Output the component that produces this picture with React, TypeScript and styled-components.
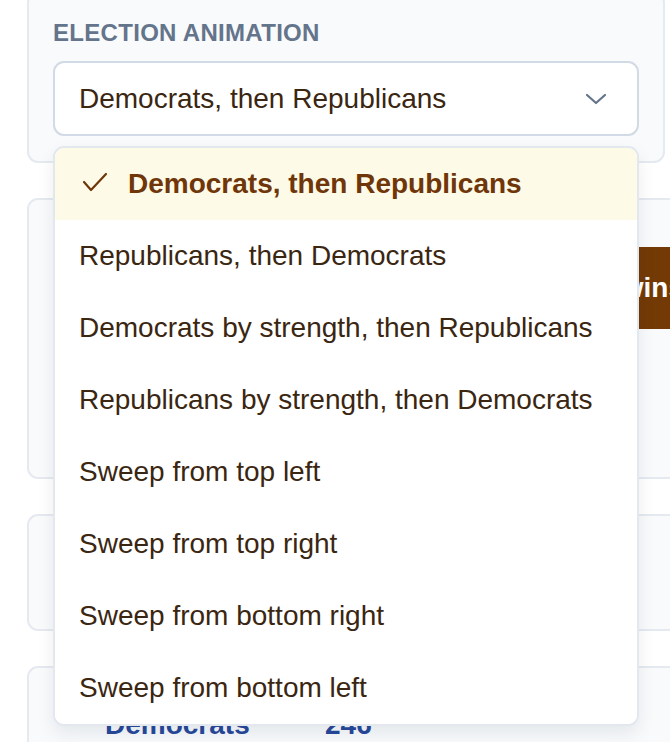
import React, { useState } from "react";
import styled, { createGlobalStyle } from "styled-components";

const GlobalStyle = createGlobalStyle`
    html, body {
        margin: 0;
        padding: 0;
        background: #ffffff;
        overflow: hidden;
    }
    body {
        font-family: "Liberation Sans", Arial, Helvetica, sans-serif;
    }
`;

const ORDERS = [
    "Democrats, then Republicans",
    "Republicans, then Democrats",
    "Democrats by strength, then Republicans",
    "Republicans by strength, then Democrats",
    "Sweep from top left",
    "Sweep from top right",
    "Sweep from bottom right",
    "Sweep from bottom left",
];

const Page = styled.main`
    display: flex;
    flex-direction: column;
    gap: 35px;
    padding-left: 27px;
    margin-top: -8px;
`;

const Card = styled.section<{ $width: number; $height?: number }>`
    box-sizing: border-box;
    width: ${(p) => p.$width}px;
    height: ${(p) => (p.$height ? `${p.$height}px` : "auto")};
    flex-shrink: 0;
    background: #f8fafc;
    border: 2px solid #e5e9f0;
    border-radius: 11px;
    padding: 24px;
`;

const SettingsCard = styled(Card)`
    position: relative;
    z-index: 2;
    padding: 26px 24px 25px;
`;

const Label = styled.div`
    font-size: 24px;
    line-height: 26px;
    font-weight: 700;
    letter-spacing: 0.3px;
    color: #64748b;
    text-transform: uppercase;
    margin-bottom: 15px;
`;

const SelectWrap = styled.div`
    position: relative;
`;

const Trigger = styled.button`
    box-sizing: border-box;
    width: 100%;
    height: 75px;
    display: flex;
    align-items: center;
    justify-content: space-between;
    padding: 0 30px 0 24px;
    background: #ffffff;
    border: 2px solid #d2dae5;
    border-radius: 11px;
    font-family: inherit;
    font-size: 28px;
    color: #3a2611;
    cursor: pointer;
`;

const Menu = styled.ul`
    position: absolute;
    top: calc(100% + 10px);
    left: 0;
    right: 0;
    margin: 0;
    padding: 0;
    list-style: none;
    background: #ffffff;
    border: 2px solid #e3e8ef;
    border-radius: 11px;
    overflow: hidden;
    box-shadow: 0 8px 18px rgba(15, 23, 42, 0.08);
`;

const Option = styled.li<{ $selected: boolean }>`
    height: 72px;
    display: flex;
    align-items: center;
    gap: 20px;
    padding: 0 24px;
    font-size: 28px;
    font-weight: ${(p) => (p.$selected ? 700 : 400)};
    color: ${(p) => (p.$selected ? "#6f3609" : "#3a2611")};
    background: ${(p) => (p.$selected ? "#fefae8" : "#ffffff")};
    white-space: nowrap;
    cursor: pointer;
`;

const Check = styled.svg`
    flex-shrink: 0;
    margin: -4px 0 0 3px;
`;

const MapHeader = styled.div`
    display: flex;
    justify-content: flex-end;
`;

const WinnerButton = styled.button`
    margin-top: 23px;
    height: 82px;
    padding: 0 24px;
    border: none;
    border-radius: 8px;
    background: #733a06;
    color: #ffffff;
    font-family: inherit;
    font-size: 28px;
    font-weight: 700;
    white-space: nowrap;
`;

const ResultRow = styled.div`
    display: grid;
    grid-template-columns: 220px auto;
    padding: 17px 0 0 52px;
    font-size: 28px;
    font-weight: 700;
    color: #27499b;
`;

function Chevron() {
    return (
        <svg width="22" height="14" viewBox="0 0 22 14" fill="none">
            <path d="M2 3 L11 11 L20 3" stroke="#64748b" strokeWidth="2.2" strokeLinecap="round" strokeLinejoin="round" />
        </svg>
    );
}

export default function App() {
    const [order, setOrder] = useState(0);
    const [open, setOpen] = useState(true);

    return (
        <>
            <GlobalStyle />
            <Page>
                <SettingsCard $width={638}>
                    <Label>Election animation</Label>
                    <SelectWrap>
                        <Trigger onClick={() => setOpen(!open)}>
                            <span>{ORDERS[order]}</span>
                            <Chevron />
                        </Trigger>
                        {open && (
                            <Menu>
                                {ORDERS.map((item, i) => (
                                    <Option
                                        key={item}
                                        $selected={i === order}
                                        onClick={() => {
                                            setOrder(i);
                                            setOpen(false);
                                        }}
                                    >
                                        {i === order && (
                                            <Check width="26" height="20" viewBox="0 0 26 20" fill="none">
                                                <path d="M2 10 L9 18 L24 2" stroke="#6f3609" strokeWidth="2.2" strokeLinecap="round" strokeLinejoin="round" />
                                            </Check>
                                        )}
                                        {item}
                                    </Option>
                                ))}
                            </Menu>
                        )}
                    </SelectWrap>
                </SettingsCard>

                <Card $width={707} $height={281}>
                    <MapHeader>
                        <WinnerButton>Who wins</WinnerButton>
                    </MapHeader>
                </Card>

                <Card $width={707} $height={117} />

                <Card $width={707} $height={140}>
                    <ResultRow>
                        <span>Democrats</span>
                        <span>246</span>
                    </ResultRow>
                </Card>
            </Page>
        </>
    );
}
